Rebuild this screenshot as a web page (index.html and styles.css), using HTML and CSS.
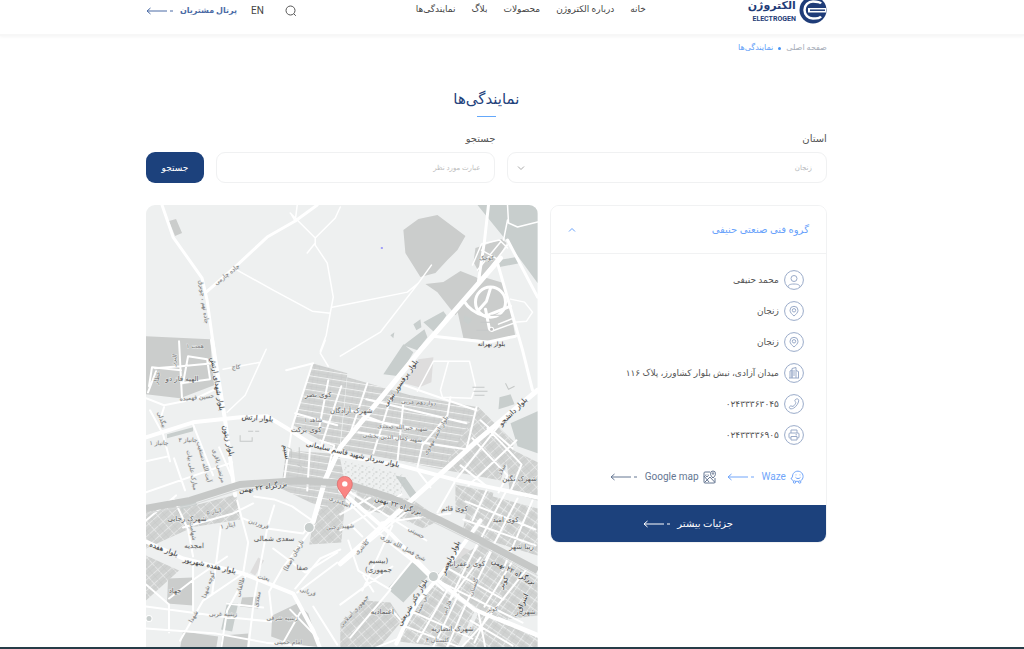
FILE: index.html
```html
<!DOCTYPE html>
<html lang="fa" dir="rtl">
<head>
<meta charset="utf-8">
<meta name="viewport" content="width=device-width, initial-scale=1">
<title>نمایندگی‌ها</title>
<link rel="stylesheet" href="styles.css">
</head>
<body>
<svg class="defs" aria-hidden="true">
  <symbol id="arrow" viewBox="0 0 27 8"><path d="M4.500 1 1 4l3.500 3M1 4h20M24 4h3" fill="none" stroke="currentColor"/></symbol>
  <symbol id="pin" viewBox="0 0 20 20"><circle cx="10" cy="10" r="9.400"/><path d="M10 15c-2-1.700-4-3.500-4-5.700a4 4 0 0 1 8 0c0 2.200-2 4-4 5.700z"/><circle cx="10" cy="9.300" r="1.700"/></symbol>
</svg>
<header class="header">
  <div class="container header-row">
    <a class="logo" href="#" aria-label="الکتروژن">
      <svg class="logo-mark" viewBox="0 0 28 28"><circle cx="14" cy="14" r="13.500" fill="#1f3c78"/><path d="M22 7.500Q20.500 5.500 14 5.500a8.500 8.500 0 0 0 0 17q6.500 0 8-2" fill="none" stroke="#fff" stroke-width="2.500"/><path d="M9 12h18v4.500H9z" fill="#fff"/><path d="M11 14.200h15" stroke="#1f3c78" stroke-width="1.500"/></svg>
      <span class="logo-text"><span class="logo-fa">الکتروژن</span><span class="logo-en">ELECTROGEN</span></span>
    </a>
    <nav class="nav">
      <a href="#">خانه</a><a href="#">درباره الکتروژن</a><a href="#">محصولات</a><a href="#">بلاگ</a><a href="#">نمایندگی‌ها</a>
    </nav>
    <div class="tools">
      <button class="search-icon" type="button" aria-label="جستجو"><svg viewBox="0 0 12 12"><circle cx="5.500" cy="5.500" r="4.500"/><path d="m8.800 8.800 2 2"/></svg></button>
      <a class="lang" href="#">EN</a>
      <a class="portal" href="#">پرتال مشتریان <svg class="arrow"><use href="#arrow"/></svg></a>
    </div>
  </div>
</header>
<main class="container main">
  <nav class="crumbs"><a href="#">صفحه اصلی</a><i></i><a class="current" href="#">نمایندگی‌ها</a></nav>
  <h1 class="title">نمایندگی‌ها</h1>
  <form class="filters">
    <div class="field"><label for="state">استان</label>
      <div class="select"><select id="state"><option>زنجان</option></select><svg class="chevron" viewBox="0 0 8 8"><path d="m1 2.500 3 3 3-3"/></svg></div></div>
    <div class="field"><label for="query">جستجو</label><input id="query" type="text" placeholder="عبارت مورد نظر"></div>
    <button class="submit" type="button">جستجو</button>
  </form>
  <div class="columns">
    <section class="card">
      <button class="card-head" type="button" aria-expanded="true"><span>گروه فنی صنعتی حنیفی</span><svg class="chevron" viewBox="0 0 8 8"><path d="m1 5.500 3-3 3 3"/></svg></button>
      <ul class="details">
        <li><svg viewBox="0 0 20 20"><circle cx="10" cy="10" r="9.400"/><circle cx="10" cy="8.500" r="3"/><path d="M4 17c0-2 2-3 6-3s6 1 6 3"/></svg>محمد حنیفی</li>
        <li><svg><use href="#pin"/></svg>زنجان</li>
        <li><svg><use href="#pin"/></svg>زنجان</li>
        <li><svg viewBox="0 0 20 20"><circle cx="10" cy="10" r="9.400"/><path d="M5 15h10M6 15V8l2-1v8M8 15V5.500l4-1V15M12 7.500l2.500 1V15M10 7v6"/></svg>میدان آزادی، نبش بلوار کشاورز، پلاک ۱۱۶</li>
        <li><svg viewBox="0 0 20 20"><circle cx="10" cy="10" r="9.400"/><path d="M12 5.200c1-.8 2.500-.2 2.700 1 .3 2-2.200 6.300-5 7.900-1.500.9-4 1.200-4.300-.2-.2-1 .6-2 1.600-2 .8 0 1.200.8 2 .5 1.200-.6 2.600-2.400 2.800-3.800 0-.9-1-1.100-1-1.900 0-.6.500-1.100 1.200-1.500z"/></svg>۰۲۴۳۳۳۶۳۰۴۵</li>
        <li><svg viewBox="0 0 20 20"><circle cx="10" cy="10" r="9.400"/><path d="M7 8V5h6v3M7 13H5.500Q5 13 5 12V9q0-1 1-1h8q1 0 1 1v3q0 1-1 1h-1M7 11.500h6V15H7zM11.500 9.800H13"/></svg>۰۲۴۳۳۳۳۶۹۰۵</li>
      </ul>
      <div class="routes">
        <a class="waze" href="#"><svg class="route-icon" viewBox="0 0 14 14"><path d="M1 8c1 0 1.500-.5 1.500-2a5.300 5.300 0 1 1 8 5M5.500 11.300h3M3.500 10.800C2.500 10.500 1.500 9.500 1 8M6 4.500v.8M10 4.500v.8M5.500 7.300c1 1.700 4 1.700 5 0"/><circle cx="4.500" cy="12" r="1.200"/><circle cx="9.700" cy="12" r="1.200"/></svg>Waze <svg class="arrow"><use href="#arrow"/></svg></a>
        <a class="gmap" href="#"><svg class="route-icon" viewBox="0 0 14 14"><path d="M7 2H2Q1 2 1 3v9q0 1 1 1h9q1 0 1-1V8M1.500 12.500 7 7l5 5.500M1 6l5 6M3 4.500a1.300 1.300 0 1 0 2 0M10 8C8.500 6.500 7.500 5.200 7.500 3.500a2.500 2.500 0 0 1 5 0C12.500 5.200 11.500 6.500 10 8z"/><circle cx="10" cy="3.500" r=".8"/></svg>Google map <svg class="arrow"><use href="#arrow"/></svg></a>
      </div>
      <a class="more" href="#">جزئیات بیشتر <svg class="arrow"><use href="#arrow"/></svg></a>
    </section>
    <div class="map">
      <svg viewBox="146 205 391 443" preserveAspectRatio="xMidYMin slice" role="img" aria-label="نقشه زنجان">
        <defs>
          <pattern id="rows" width="14" height="7" patternUnits="userSpaceOnUse" patternTransform="rotate(9)"><rect width="14" height="7" fill="#d0d2d1"/><path d="M0 .5h14" stroke="#f0f1f1"/><path d="M0 4h14M4 1v6M9 1v6" stroke="#c6c9c8" stroke-width=".5"/></pattern>
          <pattern id="diag" width="11" height="8" patternUnits="userSpaceOnUse" patternTransform="rotate(35)"><rect width="11" height="8" fill="#d0d2d1"/><path d="M0 .5h11M.500 0v8" stroke="#e8eaea"/><path d="M0 4h11M5 0v8" stroke="#c6c9c8" stroke-width=".5"/></pattern>
          <pattern id="anti" width="12" height="8" patternUnits="userSpaceOnUse" patternTransform="rotate(-42)"><rect width="12" height="8" fill="#d0d2d1"/><path d="M0 .5h12M.500 0v8" stroke="#e8eaea" stroke-width=".8"/><path d="M0 4h12M6 0v8" stroke="#c6c9c8" stroke-width=".5"/></pattern>
          <pattern id="dots" width="7" height="6" patternUnits="userSpaceOnUse"><path d="M1 1h1v1H1zM4 3h2v1H4zM2 5h1v1H2z" fill="#c2c6c4"/></pattern>
        </defs>
        <path fill="#eef0f0" d="M146 205h391v443H146z"/>
        <g fill="#cbcdcc">
          <path d="M437 215l28 21-8 14-10 10-12 13-15 4-15-24-2-23 15-11zM425 284l18-2 17-11 15 6 8 4-28 34-18-23zM475 248l12-4 14-5 5 4-10 19-13 19-10-19zM483 277l20 6 7 27 5 27-20 4-32-3-6-27zM169 221l7-2 6 14-7 3z"/>
          <path d="M146 336l64 3 4 46-34 13-34-4zM168 578l24-1 1 28-26-2zM222 635l26-2-1 15h-27zM183 631l35 5-2 12h-36zM272 615l25-12 11 10 12 35h-16l-33-12zM242 597l15-1 1 12-18-2z"/>
        </g>
        <path fill="#dedddd" d="M418 359l15-2-2 25-12 5-15-4zM458 545l29 12-14 23-23-12zM258 557l6 3-9 15-5-3z"/>
        <g fill="#c8cecd">
          <path d="M477 205h60v78l-30-41zM443 311l3 4-11 18-12-11zM424 329l3 8-10 13-14-5zM403 344l10 8-14 24-16-2zM498 260l18-3 4 6-21 4zM499 397l11-3 4 10-16 5zM510 423l27-12v42l-20-7zM387 588l25-27 18 12-27 29zM227 602l11 1-6 28-11-2zM517 587l12 1-24 34-10-5zM174 505l21-6 8 20-25 6zM167 434l26-7v4l-26 7zM395 475l10 2 12 17-6 5z"/>
          <path d="M413 324l7-5 1 8-5 3zM390 335l4-3-1 6zM464 315l8 4-4 5-5-3z"/>
        </g>
        <path fill="url(#rows)" d="M347 377l63 18 68 12 16 20-34 31-18 11-102-20zM312 363l35 10-8 77-46-25z"/>
        <path fill="url(#rows)" d="M286 450l53 4 10 50-16 9-52-25z"/>
        <path fill="url(#anti)" d="M478 407l36 35-14 38-58-11zM505 446l32 16v38l-28-8zM340 623l25-23 25 2 12 18-24 28h-38zM315 510l30-10-4 42-32 2zM146 508l32-7 12 27-44 20zM146 555l33 15-33 30zM183 508l53-14 4 25-56 9z"/>
        <path fill="url(#diag)" d="M403 625l29-42 42 28-18 37-56-7zM470 490l67 18v47l-75-23zM478 612l59 23v13h-75zM432 577l48-34 57 35v37l-50 6zM357 490l55 9 28 20-17 9-25-11-46-11zM455 484l38 8-6 25-32-5z"/>
        <path fill="url(#dots)" d="M342 460l65 15-8 23-50-6z"/>
        <g fill="none" stroke="#fff" stroke-linecap="round" stroke-linejoin="round">
          <g stroke-width="1.500">
            <path d="M290 213l25 25v7l12 18 6 34-3 16-4 22-6 16M340 207l-5 11-20 20M315 243l-8 10M295 221l-4-7M295 221l2-16M332 307l75-15 11-9 13-18M418 283l-38 49-40 24M237 270l36 20 39 21 18 2M507 205l1 18 9 4 20-5M507 220l-4 20M472 265l9-21 18-4 8 8M477 270l23-28M483 276l24-31M481 250l16 9"/>
            <path d="M510 299l14 3 8 10-6 9-12 1M498 324l15-6M491 331l22-8M223 369l37-7 6-13M266 349l-21 46-18 17M325 340l-5 13 8 13M433 361h36l6 25-4 12-29-1-2-7 8-29M433 361l-16 30"/>
          </g>
          <g stroke-width="2">
            <path d="M179 341l3 58M181 366l32-3M155 368l25-2M149 386l3-19 29 3M181 383l29-4-3-20-19-3-5 27M146 398l18 7 30-6 25-12M156 371l-8 21M150 410l13 24 7 27M164 407l-4 13M193 424l20 51M174 458l11 32M146 461l22-5M146 492l86-30M219 447l12 28M146 520l30-25M174 499l14 30 5 27M183 527l50-14 20-10M286 370l27-7M312 364l-20 62-9 60M328 380l-9 47M341 386l-21 62M295 413l42 12M310 443l-3 47M320 440l14 5-12 45M367 383l-17 50M350 410l40 15M391 396l-18 57M404 385l72 25M476 407l-10 42M450 397l-3 18-25 30-5 22M358 432l107 17M366 399l100 24M362 418l60 12M403 402l-6 60M487 428l34 36-11 27M472 438l35 37-9 17M500 423l-46 58M516 440l-48 45M460 465l25 20M417 470l13 17M480 420l32 28M146 606l75 10 50 5M146 628l70 5 50 9 50 5M193 560v50M221 524l-9 70M237 500l11 42-5 31-40 27-23 40M254 496l20 3 18 7 20 14M243 518l24 10-13 70-6 50M267 528l36 5 12-18M274 505l-7 23M273 548l32 24 32-20M295 588l25-30 20-9M297 592l40-30M272 618l-3-27 13-23 32-43M169 598l26-20 32-22M146 584l23 20v28M247 573l-20 37-6 38M227 603l36 4M283 642l17-30M290 609l28 29M313 606l24 38M346 500l45 44 38 30M340 565l71-58M350 492l76 48M381 522l69-9M340 530l61-36M340 514l30-17M350 524l12 12M348 540l10 30 32 19-40 48M362 590l30-65M390 587l22-27M391 609l14 16M406 554l37 36M363 575l10 16M340 604l52-38M403 625l60 23M412 611l60 27M425 590l-27 48-25 10M431 577l91 45M448 568l55 31M449 586l-32 55M458 594l-25 52M477 543l-27 55M480 557l-31 43M492 548l-29 61-17 39M515 556l-31 50M529 565l-47 59-22 24M490 607l-16 35M506 490l-32 60M517 498l-32 62M532 500l-30 70M465 501l70 28M463 519l72 26M454 482l-17 30M486 490l-14 30M478 612l7 36M470 620l42 25M498 617l39 16"/>
          </g>
          <g stroke-width="3">
            <path d="M162 205l11 32 29 41 5 22 7 50M317 205l-22 16-28 16-30 28-32 28M488 205l-4 36-6 40M497 263l25 87 10 40M507 240l30 57M433 336l54 6 28-6M463 300q7 12 22 16l25-10M478 310l8-9 4-13"/>
            <circle cx="490" cy="302" r="15"/><path d="M485 309l4 20"/>
          </g>
          <path stroke-width="4" d="M212 340l13 80 10 75M146 437l47-15 47-5 27-1 23 14 20 13 30 12 60 10 57 15 80 17M146 541l37 17 60 15 50 20 20 37 7 18M340 490l50 43 40 41 44 35 63 26M480 520l-32 45-36 43-16 35"/>
          <path stroke-width="5" d="M500 258l-80 92-80 97-15 32-12 42M537 390l-60 50-55 50-82 73"/>
        </g>
        <path d="M146 508l44-8 50-16 60-4 45 3 45 14 50 23 40 20 57 30" fill="none" stroke="#c6c8c7" stroke-width="7"/>
        <path d="M146 513l44-8 50-16 60-4 45 3 45 14 50 23 40 20 57 30" fill="none" stroke="#d8dada"/>
        <g fill="#c8cecd" stroke="#fff"><circle cx="309" cy="527" r="5"/><circle cx="433" cy="576" r="5"/><circle cx="149" cy="618" r="3"/></g>
        <g fill="none" stroke="#c5c8c7"><path d="M240 435v6h12v-4M248 431h5M255 431h4M472 387h12M473 391h14M474 395h10M287 447l4 2v9M299 447v12M297 464l5 3M505 383l3 6 6-3M490 315h12M480 322h10M476 330h12"/></g>
        <circle cx="491" cy="329" r="2" fill="#bbb" stroke="#fff"/>
        <g class="small">
          <text transform="translate(228 276) rotate(-38)">جاده چارمی</text><text transform="translate(202 302) rotate(82)">جاده تهم ، چوبرق</text><text x="195" y="348">همت ۱</text><text x="236" y="369">کاج</text><text transform="translate(197 399) rotate(-5)">حسین فهمیده</text>
          <text transform="translate(160 420) rotate(70)">بیگدلی</text><text x="159" y="445">جانباز ۱</text><text x="188" y="442">جانباز ۳</text><text transform="translate(190 470) rotate(80)">مبارک علی بیات</text><text transform="translate(202 462) rotate(75)">آیت الله دستغیب</text><text transform="translate(217 466) rotate(75)">مرتضی باقری</text>
          <text x="313" y="422">شاهد ۱</text><text x="486" y="260">کوچک</text><text transform="translate(176 360) rotate(-80)">البرز</text><text transform="translate(159 378) rotate(-80)">عطار</text><text transform="translate(418 404) rotate(4)">دوازدهم غربی</text><text transform="translate(402 429) rotate(4)">شهید خیرالله صمدی</text><text transform="translate(392 439) rotate(5)">شهید کمال الدین یخشی</text><text transform="translate(437 436) rotate(-60)">بلوار احمد مهدوی</text>
          <text transform="translate(214 513) rotate(-10)">ایثار ۵</text><text transform="translate(228 527) rotate(-10)">ایثار ۱</text><text transform="translate(258 525) rotate(20)">فروردین</text><text transform="translate(210 585) rotate(-70)">کوچه شهدا</text><text transform="translate(242 587) rotate(-75)">طالقانی</text><text transform="translate(259 599) rotate(-80)">سعدی</text><text transform="translate(263 579) rotate(15)">بعثت</text><text x="223" y="615">زینبیه غربی</text><text x="282" y="619">زینبیه شرقی</text><text transform="translate(307 593) rotate(20)">قربانی</text><text x="288" y="643">امام خمینی</text><text transform="translate(295 556) rotate(-60)">نارنجان (صفا)</text><text transform="translate(195 617) rotate(-60)">شهدا</text><text transform="translate(191 531) rotate(80)">شهامت</text>
          <text transform="translate(402 549) rotate(28)">شیخ فضل الله نوری</text><text transform="translate(355 612) rotate(-48)">جمهوری اسلامی</text><text transform="translate(363 548) rotate(-45)">کلانتری</text><text transform="translate(475 587) rotate(-70)">گلستان</text><text x="437" y="641">گلستان ۴</text><text x="492" y="610">کوثر</text><text transform="translate(415 534) rotate(30)">حسینی</text><text transform="translate(448 608) rotate(-65)">فارابی</text><text transform="translate(423 604) rotate(-65)">ابن سینا</text><text transform="translate(339 503) rotate(22)">اسکندری</text><text transform="translate(340 528) rotate(-5)">شهید رجبی</text><text transform="translate(503 470) rotate(-65)">میلاد</text>
        </g>
        <g class="area">
          <text x="182" y="381">الهیه فاز دو</text><text x="318" y="397">کوی نصر</text><text x="306" y="432">کوی برکت</text><text x="351" y="413">شهرک آزادگان</text><text x="519" y="481">شهرک نگین</text><text x="187" y="521">شهرک رجایی</text><text x="194" y="548">امجدیه</text><text x="274" y="541">سعدی شمالی</text><text x="302" y="569">صفا</text><text x="175" y="592">جهاد</text><text x="454" y="511">کوی قائم</text><text x="505" y="522">کوی امید</text><text x="521" y="549">زیبا شهر</text><text x="465" y="565">کوی زعفرانیه</text><text x="378" y="562">(بیسیم</text><text x="378" y="571">جمهوری)</text><text x="382" y="613">اعتمادیه</text><text x="452" y="630">شهرک انصاریه</text><text x="525" y="613">شهریار</text>
        </g>
        <g class="road">
          <text transform="translate(215 384) rotate(80)">بلوار شهدای ارتش</text><text transform="translate(257 420) rotate(5)">بلوار ارتش</text><text transform="translate(226 441) rotate(77)">بلوار زیتون</text><text transform="translate(284 452) rotate(80)">نسیم</text><text transform="translate(263 489) rotate(-8)">بزرگراه ۲۲ بهمن</text><text transform="translate(352 456) rotate(13)">بلوار سردار شهید قاسم سلیمانی</text><text transform="translate(402 384) rotate(-55)">بلوار پرفسور ثبوتی</text><text transform="translate(514 413) rotate(-45)">بلوار دانشجو</text><text x="491" y="346" class="thin">بلوار بهرانه</text><text transform="translate(209 567) rotate(13)">بلوار هفده شهریور</text><text transform="translate(163 551) rotate(20)">بلوار هفده</text><text transform="translate(397 507) rotate(17)">بزرگراه ۲۲ بهمن</text><text transform="translate(512 573) rotate(28)">بزرگراه ۲۲ بهمن</text><text transform="translate(452 558) rotate(-65)">بلوار ولیعصر</text><text transform="translate(414 603) rotate(-60)">بلوار دکتر شریعتی</text><text transform="translate(505 583) rotate(-60)">کوثر</text><text transform="translate(524 603) rotate(-65)">اشراق</text>
        </g>
        <path d="M380.500 247.500h2v1h-2z" fill="#5550ff"/>
        <path d="M344.500 498c-3-6-7.500-9-7.500-14.500a7.500 7.500 0 0 1 15 0c0 5.500-4.500 8.500-7.500 14.500z" fill="#fa8583" stroke="#d96565" stroke-width=".7"/><circle cx="344.500" cy="483.500" r="2.700" fill="#fff"/>
      </svg>
    </div>
  </div>
</main>
<footer class="footer"></footer>
</body>
</html>
```
FILE: styles.css
```css
* { box-sizing: border-box; }
body {
  margin: 0;
  height: 100vh;
  display: flex;
  flex-direction: column;
  overflow: hidden;
  background: #fff;
  color: #555;
  font: 9px/16px Roboto, "DejaVu Sans", sans-serif;
}
a { color: inherit; text-decoration: none; }
button, input, select { font: inherit; }
button { cursor: pointer; }
.defs { position: absolute; width: 0; height: 0; }
.container { width: 66.5%; margin-right: 19.25%; margin-left: auto; }
.header { height: 36px; flex: none; border-bottom: 2px solid #f7f7f7; overflow: hidden; box-shadow: 0 1px 3px #f5f5f5; }
.header-row { display: flex; align-items: flex-start; }
.arrow { width: 27px; height: 8px; flex: none; }
.logo { display: flex; gap: 3px; color: #1f3c78; margin-top: -4px; }
.logo-mark { width: 28px; height: 28px; }
.logo-text { display: flex; flex-direction: column; align-items: flex-end; width: 47px; direction: ltr; }
.logo-fa { font: bold 11px/20px "DejaVu Sans", sans-serif; white-space: nowrap; }
.logo-en { font: bold 7px/6px Roboto, sans-serif; }
.nav { display: flex; gap: 16px; margin-right: 103px; line-height: 18px; color: #444; white-space: nowrap; }
.tools { display: flex; align-items: center; margin-right: auto; height: 22px; white-space: nowrap; }
.search-icon { border: 0; padding: 0; background: none; width: 12px; height: 12px; margin-left: 21px; }
.search-icon svg { display: block; width: 12px; height: 12px; fill: none; stroke: #555; }
.lang { font-size: 10px; color: #444; margin-left: 14px; }
.portal { display: flex; align-items: center; gap: 7px; font-size: 8px; font-weight: bold; color: #4b6ba5; }
.main { flex: 1; min-height: 0; display: flex; flex-direction: column; }
.crumbs { display: flex; align-items: center; gap: 5px; margin-top: 4px; color: #a6adb8; font-size: 8px; }
.crumbs i { width: 3px; height: 3px; border-radius: 50%; background: #4593f5; }
.crumbs .current { color: #62a0f8; }
.title { margin: 31px 0 0; font-size: 15px; line-height: 24px; font-weight: normal; color: #1f427c; text-align: center; }
.title::after { content: ""; display: block; width: 19px; height: 1px; margin: 5px auto 0; background: #64a8fb; }
.filters { display: grid; grid-template-columns: 320fr 280fr 58fr; gap: 12px; align-items: end; margin-top: 14px; }
.field { display: flex; flex-direction: column; gap: 5px; }
.field label { font-size: 10px; line-height: 16px; }
.select { display: grid; align-items: center; }
.select > * { grid-area: 1 / 1; }
.field input, .field select { width: 100%; height: 31px; padding: 0 14px; border: 1px solid #f0f1f2; border-radius: 9px; background: #fff; color: #b5b8bb; font-size: 7px; appearance: none; outline: 0; }
.field input::placeholder { color: #bdbdbd; opacity: 1; }
.chevron { width: 8px; height: 8px; fill: none; stroke: currentColor; }
.select .chevron { justify-self: end; margin-left: 10px; color: #aaa; pointer-events: none; }
.submit { height: 31px; padding: 0; border: 0; border-radius: 9px; background: #1c417c; color: #fff; }
.columns { flex: 1; min-height: 0; display: grid; grid-template-columns: 277fr 391fr; gap: 12px; align-items: start; margin-top: 22px; }
.card { border: 1px solid #f1f2f3; border-radius: 9px; overflow: hidden; }
.card-head { display: flex; align-items: center; justify-content: space-between; width: 100%; height: 48px; padding: 0 17px; border: 0; border-bottom: 1px solid #f1f2f3; background: #fff; color: #68a2fb; font-size: 10px; }
.details { list-style: none; margin: 0; padding: 16px 22px 0; display: grid; gap: 11px; }
.details li { display: flex; align-items: center; gap: 5px; height: 20px; white-space: nowrap; }
.details svg { width: 20px; height: 20px; flex: none; fill: none; stroke: #9aabc9; stroke-width: 1; }
.routes { display: flex; gap: 10px; padding: 24px 22px 20px; font-size: 10px; line-height: 16px; }
.routes a { display: flex; align-items: center; gap: 4px; white-space: nowrap; }
.routes .arrow { margin-right: 4px; }
.route-icon { width: 14px; height: 14px; fill: none; stroke: currentColor; }
.waze { color: #70a5fa; }
.gmap { color: #657692; }
.more { display: flex; align-items: center; justify-content: center; gap: 7px; height: 37px; background: #1c417c; color: #fff; font-size: 10px; }
.map { height: 100%; min-height: 0; border-radius: 9px 9px 0 0; overflow: hidden; }
.map svg { display: block; width: 100%; height: 100%; }
.map text { text-anchor: middle; font-family: "DejaVu Sans", sans-serif; paint-order: stroke; stroke: #e8eaea; stroke-width: 1px; }
.small { font-size: 6px; fill: #777; }
.area { font-size: 7px; fill: #5c5c5c; }
.road { font-size: 7px; fill: #383838; }
.road .thin { font-size: 6px; }
.footer { flex: none; height: 2px; background: #263d48; }
```
